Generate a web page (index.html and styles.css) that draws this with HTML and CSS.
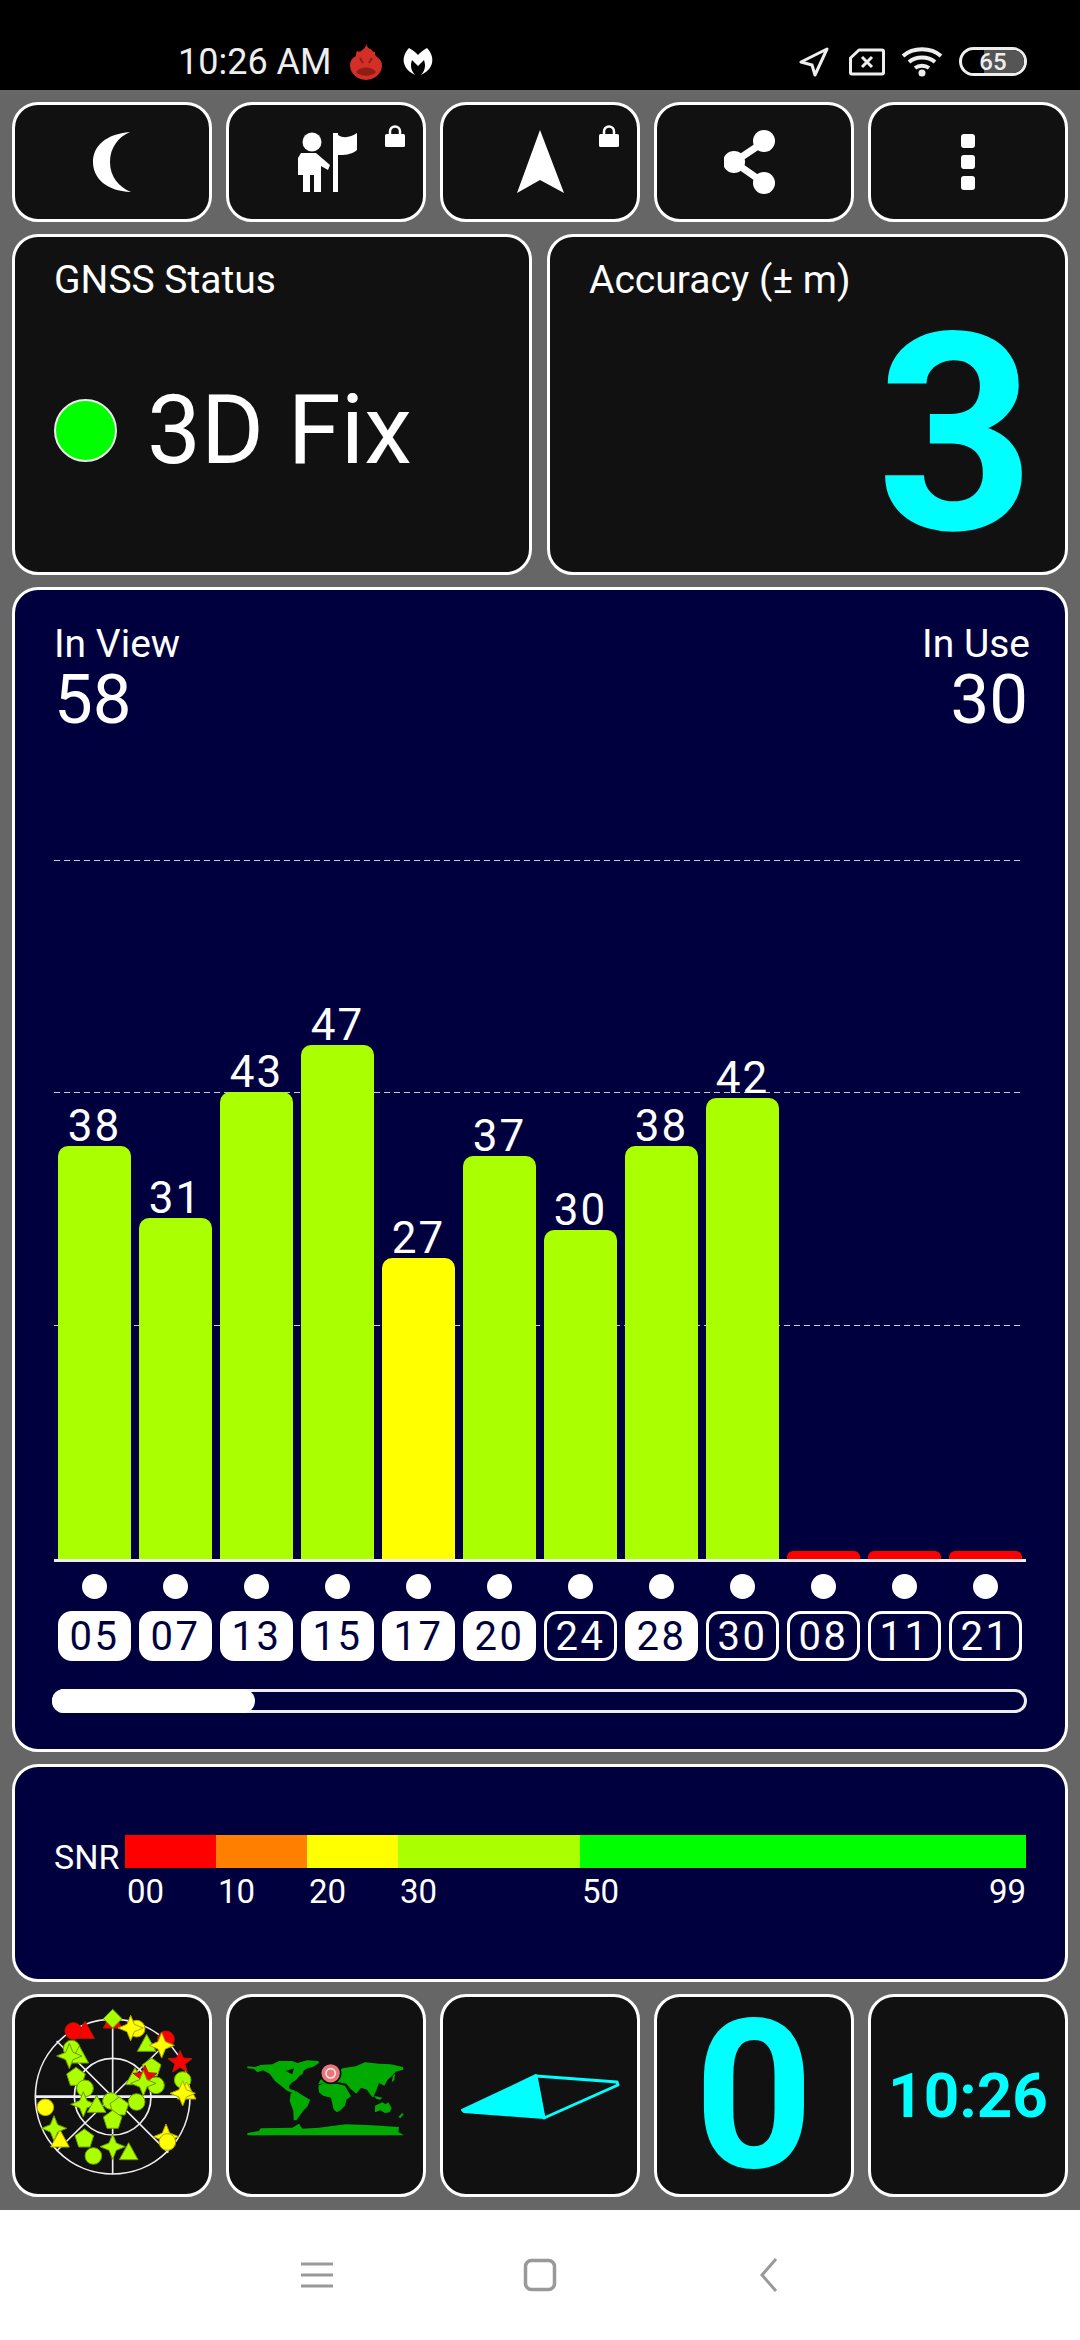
FILE: index.html
```html
<!DOCTYPE html>
<html lang="en">
<head>
    <meta charset="UTF-8">
    <meta name="viewport" content="width=device-width, initial-scale=1.0">
    <title>GNSS Status</title>
    <link rel="stylesheet" href="styles.css">
</head>
<body>
    <!-- Status bar -->
    <div class="status-bar">
        <div class="status-left">
            <span class="clock">10:26 AM</span>
            <svg class="antutu" width="32" height="36" viewBox="0 0 32 36">
                <path d="M16 0 C17 3 19 5 21 5 C22 7 23 8 25 8 C25 10 25 11 26 12 C30 15 32 18 32 21 A16 15 0 0 1 0 21 C0 17 2 14 6 12 C6 10 6 9 7 7 C9 8 11 8 12 6 C14 5 16 3 16 0 Z" fill="#d32f26"/>
                <path d="M10 14 L13 19 M22 14 L19 19" stroke="#8e1d18" stroke-width="2"/>
                <path d="M6 28 C10 22 22 22 26 28 C22 33 10 33 6 28 Z" fill="#8e1d18"/>
            </svg>
            <svg class="malware" width="30" height="27" viewBox="0 0 30 27">
                <path d="M6 0 C10 2 13 5 15 7 C17 5 20 2 24 0 C29 5 30 11 29 15 C28 20 24 24 18 27 C22 22 23 18 21 12 L15 18 L9 12 C7 18 8 22 12 27 C6 24 2 20 1 15 C0 11 1 5 6 0 Z" fill="#fff"/>
            </svg>
        </div>
        <div class="status-right">
            <svg class="nav-arrow" width="30" height="30" viewBox="0 0 30 30">
                <path d="M28 2 L2 15 L13 18 L16 28 Z" fill="none" stroke="#eee" stroke-width="3" stroke-linejoin="round"/>
            </svg>
            <svg width="36" height="28" viewBox="0 0 36 28">
                <path d="M10 2 H33 A1.500 1.500 0 0 1 34.500 3.500 V24.500 A1.500 1.500 0 0 1 33 26 H3 A1.500 1.500 0 0 1 1.500 24.500 V10 Z" fill="none" stroke="#eee" stroke-width="3" stroke-linejoin="round"/>
                <path d="M13 9 L23 19 M23 9 L13 19" stroke="#eee" stroke-width="3"/>
            </svg>
            <svg width="42" height="30" viewBox="0 0 42 30">
                <path d="M2 9 C12 0 30 0 40 9 M8 15 C15 9 27 9 34 15 M14 21 C18 18 24 18 28 21" fill="none" stroke="#eee" stroke-width="4"/>
                <circle cx="21" cy="26" r="3.500" fill="#eee"/>
            </svg>
            <div class="battery"><span class="battery-level"></span><span class="battery-text">65</span></div>
        </div>
    </div>

    <div class="main">
        <!-- Top buttons -->
        <div class="row-five top-row">
            <div class="tile">
                <svg width="40" height="62" viewBox="0 0 40 62">
                    <path d="M38 1 C14 3 1 15 1 31 C1 47 14 60 39 61 C27 56 18 46 18 31 C18 17 26 6 38 1 Z" fill="#fff"/>
                </svg>
            </div>
            <div class="tile">
                <svg width="74" height="74" viewBox="288 125 74 74">
                    <circle cx="311" cy="142" r="9.500" fill="#fff"/>
                    <path d="M300 153 H315 L329 165 L327 170 L320 166 V192 H313 V175 H309 V192 H302 V175 H297 V158 Z" fill="#fff"/>
                    <path d="M332 133 H337 V192 H332 Z" fill="#fff"/>
                    <path d="M337 135 C343 139 350 137 356 133 V150 C350 155 343 155 337 155 Z" fill="#fff"/>
                </svg>
                <svg class="lock" width="20" height="22" viewBox="0 0 20 22">
                    <path d="M5 10 V6.500 A5 5 0 0 1 15 6.500 V10" fill="none" stroke="#fff" stroke-width="2.500"/>
                    <rect y="9" width="20" height="13" rx="1.500" fill="#fff"/>
                </svg>
            </div>
            <div class="tile">
                <svg width="60" height="74" viewBox="510 125 60 74">
                    <path d="M540 130 L564 193 L540 180 L517 193 Z" fill="#fff"/>
                </svg>
                <svg class="lock" width="20" height="22" viewBox="0 0 20 22">
                    <path d="M5 10 V6.500 A5 5 0 0 1 15 6.500 V10" fill="none" stroke="#fff" stroke-width="2.500"/>
                    <rect y="9" width="20" height="13" rx="1.500" fill="#fff"/>
                </svg>
            </div>
            <div class="tile">
                <svg width="60" height="70" viewBox="724 127 60 70">
                    <path d="M764 142 L734 162 L764 183" fill="none" stroke="#fff" stroke-width="7"/>
                    <circle cx="764" cy="141" r="11" fill="#fff"/>
                    <circle cx="734" cy="162" r="11" fill="#fff"/>
                    <circle cx="764" cy="183" r="11" fill="#fff"/>
                </svg>
            </div>
            <div class="tile">
                <div class="more-dots"><span></span><span></span><span></span></div>
            </div>
        </div>

        <!-- Status and accuracy -->
        <div class="row-two">
            <div class="panel status-panel">
                <div class="panel-title">GNSS Status</div>
                <div class="fix-row">
                    <span class="fix-dot"></span>
                    <span class="fix-text">3D Fix</span>
                </div>
            </div>
            <div class="panel accuracy-panel">
                <div class="panel-title">Accuracy (± m)</div>
                <div class="accuracy-value">3</div>
            </div>
        </div>

        <!-- Signal chart -->
        <div class="panel navy chart-panel">
            <div class="chart-head">
                <div>
                    <div class="head-label">In View</div>
                    <div class="head-number">58</div>
                </div>
                <div class="head-right">
                    <div class="head-label">In Use</div>
                    <div class="head-number">30</div>
                </div>
            </div>
            <div class="plot">
                <div class="grid-line g1"></div>
                <div class="grid-line g2"></div>
                <div class="grid-line g3"></div>
                <div class="sat-grid bars">
                    <div class="bar-col"><span>38</span><div class="bar lime" style="height:413px"></div></div>
                    <div class="bar-col"><span>31</span><div class="bar lime" style="height:341px"></div></div>
                    <div class="bar-col"><span>43</span><div class="bar lime" style="height:467px"></div></div>
                    <div class="bar-col"><span>47</span><div class="bar lime" style="height:514px"></div></div>
                    <div class="bar-col"><span>27</span><div class="bar yellow" style="height:301px"></div></div>
                    <div class="bar-col"><span>37</span><div class="bar lime" style="height:403px"></div></div>
                    <div class="bar-col"><span>30</span><div class="bar lime" style="height:329px"></div></div>
                    <div class="bar-col"><span>38</span><div class="bar lime" style="height:413px"></div></div>
                    <div class="bar-col"><span>42</span><div class="bar lime" style="height:461px"></div></div>
                    <div class="bar-col"><div class="bar red" style="height:8px"></div></div>
                    <div class="bar-col"><div class="bar red" style="height:8px"></div></div>
                    <div class="bar-col"><div class="bar red" style="height:8px"></div></div>
                </div>
            </div>
            <div class="axis"></div>
            <div class="sat-grid dots">
                <span></span><span></span><span></span><span></span><span></span><span></span>
                <span></span><span></span><span></span><span></span><span></span><span></span>
            </div>
            <div class="sat-grid chips">
                <div class="chip used">05</div>
                <div class="chip used">07</div>
                <div class="chip used">13</div>
                <div class="chip used">15</div>
                <div class="chip used">17</div>
                <div class="chip used">20</div>
                <div class="chip">24</div>
                <div class="chip used">28</div>
                <div class="chip">30</div>
                <div class="chip">08</div>
                <div class="chip">11</div>
                <div class="chip">21</div>
            </div>
            <div class="scroll-track"><div class="scroll-thumb"></div></div>
        </div>

        <!-- SNR legend -->
        <div class="panel navy snr-panel">
            <div class="snr-row">
                <span class="snr-label">SNR</span>
                <div class="snr-scale">
                    <div class="snr-bar">
                        <span class="seg s-red"></span>
                        <span class="seg s-orange"></span>
                        <span class="seg s-yellow"></span>
                        <span class="seg s-lime"></span>
                        <span class="seg s-green"></span>
                    </div>
                    <div class="snr-ticks">
                        <span class="tick s-red">00</span>
                        <span class="tick s-orange">10</span>
                        <span class="tick s-yellow">20</span>
                        <span class="tick s-lime">30</span>
                        <span class="tick s-green">50</span>
                        <span class="tick-end">99</span>
                    </div>
                </div>
            </div>
        </div>

        <!-- Bottom tiles -->
        <div class="row-five bottom-row">
            <div class="tile">
                <svg class="radar" width="180" height="180" viewBox="-24 0 540 540">
                    <defs>
                        <circle id="c" r="25"/>
                        <path id="t" d="M0 -30 L28 21 H-28 Z"/>
                        <path id="p" d="M0 -29 L28 -9 L17 25 H-17 L-28 -9 Z"/>
                        <path id="f" d="M0 -38 L11 -11 L38 0 L11 11 L0 38 L-11 11 L-38 0 L-11 -11 Z"/>
                        <path id="s" d="M0 -34 L10 -12 L36 -10 L15 6 L22 30 L0 16 L-22 30 L-15 6 L-36 -10 L-10 -12 Z"/>
                        <path id="d" d="M0 -28 L28 0 L0 28 L-28 0 Z"/>
                    </defs>
                    <g class="radar-lines">
                        <circle cx="248" cy="272" r="232"/>
                        <circle cx="248" cy="272" r="115"/>
                        <path d="M248 40 V505 M80 105 L415 440 M80 435 L385 135"/>
                        <path class="radar-h" d="M15 272 H480"/>
                    </g>
                    <g class="sats">
                        <use href="#t" x="165" y="76" class="m-red"/>
                        <use href="#c" x="130" y="75" class="m-red"/>
                        <use href="#t" x="248" y="45" class="m-red"/>
                        <use href="#d" x="248" y="38" class="m-lime"/>
                        <use href="#c" x="320" y="68" class="m-yellow"/>
                        <use href="#f" x="302" y="66" class="m-yellow"/>
                        <use href="#c" x="408" y="100" class="m-red"/>
                        <use href="#t" x="350" y="115" class="m-lime"/>
                        <use href="#f" x="395" y="118" class="m-yellow"/>
                        <use href="#s" x="450" y="168" class="m-red"/>
                        <use href="#c" x="125" y="128" class="m-lime"/>
                        <use href="#t" x="148" y="150" class="m-lime"/>
                        <use href="#f" x="118" y="150" class="m-lime"/>
                        <use href="#p" x="138" y="213" class="m-lime"/>
                        <use href="#c" x="165" y="247" class="m-lime"/>
                        <use href="#t" x="315" y="215" class="m-lime"/>
                        <use href="#p" x="365" y="185" class="m-lime"/>
                        <use href="#s" x="345" y="212" class="m-red"/>
                        <use href="#c" x="378" y="238" class="m-lime"/>
                        <use href="#f" x="340" y="232" class="m-lime"/>
                        <use href="#c" x="458" y="222" class="m-lime"/>
                        <use href="#t" x="470" y="258" class="m-yellow"/>
                        <use href="#f" x="458" y="262" class="m-yellow"/>
                        <use href="#f" x="160" y="295" class="m-lime"/>
                        <use href="#t" x="200" y="298" class="m-lime"/>
                        <use href="#c" x="243" y="285" class="m-lime"/>
                        <use href="#p" x="268" y="302" class="m-lime"/>
                        <use href="#c" x="320" y="288" class="m-lime"/>
                        <use href="#p" x="248" y="342" class="m-lime"/>
                        <use href="#c" x="46" y="304" class="m-yellow"/>
                        <use href="#f" x="72" y="367" class="m-lime"/>
                        <use href="#t" x="90" y="402" class="m-yellow"/>
                        <use href="#p" x="163" y="398" class="m-lime"/>
                        <use href="#c" x="190" y="450" class="m-lime"/>
                        <use href="#f" x="248" y="422" class="m-lime"/>
                        <use href="#t" x="296" y="440" class="m-lime"/>
                        <use href="#f" x="408" y="392" class="m-yellow"/>
                        <use href="#c" x="412" y="408" class="m-yellow"/>
                    </g>
                </svg>
            </div>
            <div class="tile">
                <svg width="180" height="130" viewBox="-9 -28 540 390">
                    <g fill="#00aa00">
                        <path d="M25 78 L48 80 L65 74 L100 72 L120 62 L160 62 L175 68 L205 60 L238 62 L240 68 L222 80 L205 84 L195 90 L190 102 L182 106 L172 118 L160 126 L150 136 L152 146 L166 150 L174 160 L160 158 L142 150 L128 138 L108 122 L92 100 L72 90 L55 96 L45 86 L25 84 Z"/>
                        <path d="M155 160 L172 153 L190 165 L213 178 L206 198 L192 212 L182 226 L172 240 L164 240 L163 212 L152 182 Z"/>
                        <path d="M238 132 L244 118 L262 112 L290 104 L310 84 L350 78 L378 66 L420 70 L455 72 L492 80 L493 88 L470 94 L458 108 L446 118 L436 136 L420 128 L412 150 L402 172 L392 160 L384 148 L366 142 L352 160 L335 146 L322 130 L300 126 L270 126 Z"/>
                        <path d="M238 136 L260 126 L300 132 L318 136 L336 168 L322 178 L318 196 L306 208 L294 216 L284 208 L276 172 L252 166 L240 156 Z"/>
                        <path d="M408 196 L430 186 L440 192 L448 186 L458 204 L452 216 L438 218 L424 210 L408 216 Z"/>
                        <path d="M405 166 L430 172 L424 178 L412 176 Z"/>
                        <path d="M462 106 L468 100 L466 120 L458 126 Z"/>
                        <path d="M478 230 L490 218 L494 222 L484 234 Z"/>
                        <path d="M25 278 L60 272 L65 264 L160 262 L180 250 L190 265 L240 262 L320 252 L400 255 L480 260 L478 275 L495 285 L25 285 Z"/>
                    </g>
                    <path d="M140 92 L165 84 L160 102 Z" fill="#111"/>
                    <circle cx="275" cy="99" r="30" fill="#e8777c" stroke="#111" stroke-width="5"/>
                    <circle cx="275" cy="99" r="14" fill="none" stroke="#fbe3e3" stroke-width="5"/>
                </svg>
            </div>
            <div class="tile">
                <svg width="170" height="70" viewBox="455 2060 170 70">
                    <path d="M536 2074 L462 2109 L464 2111 L544 2117 Z" fill="#0ff" stroke="#0ff" stroke-width="2" stroke-linejoin="round"/>
                    <path d="M536 2075 L617 2081 L618 2084 L544 2117 Z" fill="none" stroke="#0ff" stroke-width="3" stroke-linejoin="round"/>
                </svg>
            </div>
            <div class="tile"><span class="big-zero">0</span></div>
            <div class="tile"><span class="tile-time">10:26</span></div>
        </div>
    </div>

    <!-- Navigation bar -->
    <div class="nav-bar">
        <svg width="60" height="40" viewBox="0 0 60 40">
            <path d="M16 9 H48 M16 20 H48 M16 31 H48" stroke="#999" stroke-width="3"/>
        </svg>
        <svg width="60" height="40" viewBox="0 0 60 40">
            <rect x="15.500" y="5.500" width="29" height="29" rx="6" fill="none" stroke="#999" stroke-width="3.500"/>
        </svg>
        <svg width="60" height="40" viewBox="0 0 60 40">
            <path d="M41 4 L27 20 L41 36" fill="none" stroke="#999" stroke-width="3"/>
        </svg>
    </div>
</body>
</html>
```

FILE: styles.css
```css
* {
    box-sizing: border-box;
}
body {
    margin: 0;
    width: 1080px;
    height: 2340px;
    font-family: Roboto, "Noto Sans", sans-serif;
    background-color: #fff;
    color: #fff;
    overflow: hidden;
}
.status-bar {
    height: 90px;
    background-color: #000;
    display: flex;
    justify-content: space-between;
    align-items: center;
    padding: 33px 53px 0 178px;
}
.status-left {
    display: flex;
    align-items: center;
}
.clock {
    font-size: 36px;
    color: #eee;
    line-height: 40px;
}
.antutu {
    margin-left: 18px;
}
.malware {
    margin-left: 21px;
}
.status-right {
    display: flex;
    align-items: center;
    gap: 16px;
}
.nav-arrow {
    margin-right: 4px;
}
.battery {
    position: relative;
    width: 68px;
    height: 29px;
    border: 3px solid #eee;
    border-radius: 15px;
    overflow: hidden;
    display: flex;
    align-items: center;
    justify-content: center;
}
.battery-level {
    position: absolute;
    left: 35%;
    top: 0;
    bottom: 0;
    right: 0;
    background-color: #555;
}
.battery-text {
    position: relative;
    font-size: 24px;
    font-weight: 500;
    color: #eee;
}
.main {
    height: 2120px;
    background-color: #666;
    padding: 12px 12px 13px;
    display: flex;
    flex-direction: column;
    gap: 12px;
}
.row-five {
    display: grid;
    grid-template-columns: repeat(5, 1fr);
    column-gap: 14px;
}
.top-row {
    height: 120px;
}
.bottom-row {
    height: 203px;
}
.tile, .panel {
    background-color: #111;
    border: 3px solid #fff;
    border-radius: 26px;
}
.tile {
    position: relative;
    display: flex;
    align-items: center;
    justify-content: center;
}
.lock {
    position: absolute;
    top: 20px;
    right: 18px;
}
.more-dots {
    display: flex;
    flex-direction: column;
    gap: 7px;
}
.more-dots span {
    width: 14px;
    height: 14px;
    border-radius: 3px;
    background-color: #fff;
}
.row-two {
    height: 341px;
    display: grid;
    grid-template-columns: 520px 521px;
    grid-template-rows: 341px;
    column-gap: 15px;
}
.panel-title {
    font-size: 39px;
    line-height: 40px;
}
.status-panel, .accuracy-panel {
    padding: 23px 39px;
}
.fix-row {
    display: flex;
    align-items: center;
    gap: 30px;
    margin-top: 82px;
}
.fix-dot {
    width: 63px;
    height: 63px;
    border-radius: 50%;
    background-color: #0f0;
    border: 2px solid #eee;
}
.fix-text {
    font-size: 96px;
    line-height: 96px;
}
.accuracy-panel {
    padding-right: 30px;
}
.accuracy-value {
    font-size: 276px;
    line-height: 270px;
    font-weight: 700;
    color: #0ff;
    text-align: right;
}
.navy {
    background-color: #00003f;
}
.chart-panel {
    height: 1165px;
    display: flex;
    flex-direction: column;
    padding: 34px 39px 0;
}
.chart-head {
    display: flex;
    justify-content: space-between;
}
.head-right {
    text-align: right;
    margin-right: -4px;
}
.head-right .head-number {
    margin-right: 2px;
}
.head-label {
    font-size: 39px;
    line-height: 40px;
}
.head-number {
    font-size: 69px;
    line-height: 72px;
}
.plot {
    position: relative;
    flex: 1;
}
.grid-line {
    position: absolute;
    left: 0;
    right: 4px;
    height: 1px;
    background: repeating-linear-gradient(to right, #c8c8d8 0 6px, transparent 6px 10px);
}
.g1 {
    bottom: 698px;
}
.g2 {
    bottom: 466px;
}
.g3 {
    bottom: 233px;
}
.sat-grid {
    display: grid;
    grid-template-columns: repeat(12, 73px);
    column-gap: 8px;
    padding-left: 4px;
}
.bars {
    position: absolute;
    left: 0;
    bottom: 0;
    height: 100%;
}
.bar-col {
    display: flex;
    flex-direction: column;
    justify-content: flex-end;
    align-items: center;
}
.bar-col span {
    font-size: 44px;
    line-height: 40px;
    letter-spacing: 2px;
}
.bar {
    width: 100%;
    border-radius: 10px 10px 0 0;
}
.lime {
    background-color: #aaff00;
}
.yellow {
    background-color: #ffff00;
}
.red {
    background-color: #ff0000;
    border-radius: 6px 6px 0 0;
}
.axis {
    height: 3px;
    background-color: #eee;
}
.dots {
    margin-top: 12px;
}
.dots span {
    justify-self: center;
    width: 25px;
    height: 25px;
    border-radius: 50%;
    background-color: #fff;
}
.chips {
    margin-top: 12px;
}
.chip {
    height: 50px;
    border: 3px solid #fff;
    border-radius: 14px;
    font-size: 40px;
    line-height: 45px;
    text-align: center;
    letter-spacing: 2.500px;
}
.chip.used {
    background-color: #fff;
    color: #00003f;
}
.scroll-track {
    height: 24px;
    width: 975px;
    margin-top: 28px;
    margin-left: -2px;
    border: 3px solid #eee;
    border-radius: 12px;
    margin-bottom: 36px;
    position: relative;
}
.scroll-thumb {
    position: absolute;
    left: -3px;
    top: -3px;
    bottom: -3px;
    width: 203px;
    background-color: #fff;
    border-radius: 12px;
}
.snr-panel {
    height: 218px;
    padding: 68px 39px 0;
}
.snr-row {
    display: flex;
}
.snr-label {
    width: 71px;
    font-size: 34px;
    line-height: 44px;
}
.snr-scale {
    width: 901px;
}
.snr-bar, .snr-ticks {
    display: flex;
}
.snr-bar {
    height: 33px;
}
.seg {
    display: block;
}
.s-red {
    width: 91px;
}
.s-orange {
    width: 91px;
}
.s-yellow {
    width: 91px;
}
.s-lime {
    width: 182px;
}
.s-green {
    width: 446px;
}
.seg.s-red {
    background-color: #ff0000;
}
.seg.s-orange {
    background-color: #ff8000;
}
.seg.s-yellow {
    background-color: #ffff00;
}
.seg.s-lime {
    background-color: #aaff00;
}
.seg.s-green {
    background-color: #00ff00;
}
.snr-ticks {
    margin-top: 4px;
    font-size: 33px;
    line-height: 40px;
    position: relative;
}
.tick {
    padding-left: 2px;
}
.tick.s-green {
    width: 400px;
}
.tick-end {
    flex: 1;
    text-align: right;
}
.radar-lines {
    fill: none;
    stroke: #eee;
    stroke-width: 5;
}
.radar-h {
    stroke-width: 8;
}
.sats {
    stroke-width: 3;
}
.m-red {
    fill: #ff0000;
    stroke: #b51a00;
}
.m-lime {
    fill: #aaff00;
    stroke: #6f9a00;
}
.m-yellow {
    fill: #ffff00;
    stroke: #a8a800;
}
.big-zero {
    font-size: 208px;
    line-height: 190px;
    font-weight: 700;
    color: #0ff;
}
.tile-time {
    font-size: 62px;
    font-weight: 700;
    color: #0ff;
}
.nav-bar {
    height: 130px;
    display: flex;
    justify-content: center;
    align-items: center;
    gap: 165px;
}
```
